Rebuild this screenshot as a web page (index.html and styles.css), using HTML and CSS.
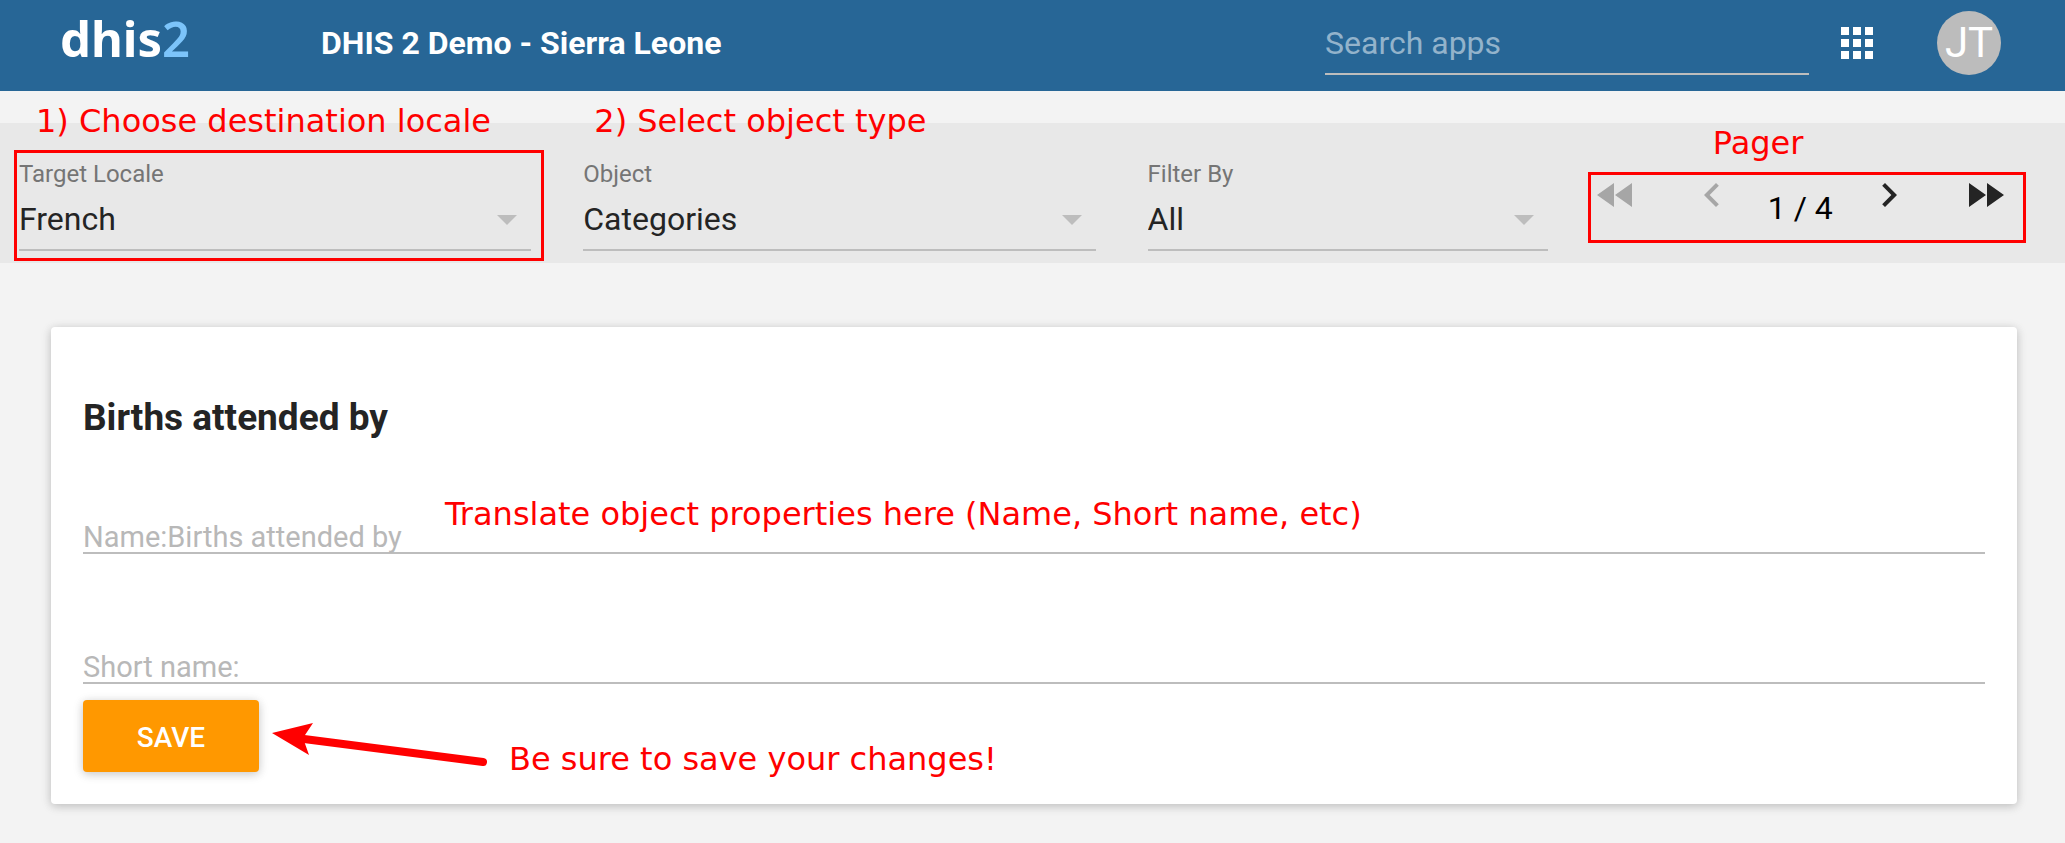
FILE: index.html
```
<!DOCTYPE html>
<html lang="en">
<head>
<meta charset="utf-8">
<meta name="viewport" content="width=device-width, initial-scale=1">
<title>DHIS 2 Demo - Sierra Leone</title>
<link rel="stylesheet" href="styles.css">
</head>
<body>
<header class="header">
  <a class="logo" href="#" aria-label="dhis2 home">dhis<span class="logo-digit">2</span></a>
  <h1 class="app-title">DHIS 2 Demo - Sierra Leone</h1>
  <input class="search" type="search" placeholder="Search apps" aria-label="Search apps">
  <button class="apps" type="button" aria-label="Apps">
    <svg viewBox="0 0 32 32" aria-hidden="true"><path d="M0 0h8v8H0zM12 0h8v8h-8zM24 0h8v8h-8zM0 12h8v8H0zM12 12h8v8h-8zM24 12h8v8h-8zM0 24h8v8H0zM12 24h8v8h-8zM24 24h8v8h-8z"/></svg>
  </button>
  <button class="avatar" type="button" aria-label="User profile">JT</button>
</header>

<section class="toolbar" aria-label="Filters">
  <div class="field">
    <label class="field-label" for="locale">Target Locale</label>
    <select class="field-select" id="locale"><option>French</option></select>
    <div class="frame frame-locale"></div>
    <p class="note note-locale">1) Choose destination locale</p>
  </div>
  <div class="field">
    <label class="field-label" for="object">Object</label>
    <select class="field-select" id="object"><option>Categories</option></select>
    <p class="note note-object">2) Select object type</p>
  </div>
  <div class="field">
    <label class="field-label" for="filter">Filter By</label>
    <select class="field-select" id="filter"><option>All</option></select>
  </div>
  <nav class="pager" aria-label="Pager">
    <button class="page-btn" type="button" disabled aria-label="First page"><svg viewBox="0 0 24 24" aria-hidden="true"><path d="M11 18V6l-8.5 6 8.5 6zm.5-6l8.5 6V6l-8.5 6z"/></svg></button>
    <button class="page-btn" type="button" disabled aria-label="Previous page"><svg viewBox="0 0 24 24" aria-hidden="true"><path d="M15.41 7.41L14 6l-6 6 6 6 1.41-1.41L10.83 12z"/></svg></button>
    <span class="page-count">1 / 4</span>
    <button class="page-btn" type="button" aria-label="Next page"><svg viewBox="0 0 24 24" aria-hidden="true"><path d="M10 6L8.59 7.41 13.17 12l-4.58 4.59L10 18l6-6z"/></svg></button>
    <button class="page-btn" type="button" aria-label="Last page"><svg viewBox="0 0 24 24" aria-hidden="true"><path d="M4 18l8.5-6L4 6v12zm9-12v12l8.5-6L13 6z"/></svg></button>
    <div class="frame frame-pager"></div>
    <p class="note note-pager">Pager</p>
  </nav>
</section>

<main class="content">
  <form class="card">
    <h2 class="card-title">Births attended by</h2>
    <div class="inputs">
      <div class="input-row">
        <input class="text-input" type="text" placeholder="Name:Births attended by" aria-label="Name">
        <p class="note note-translate">Translate object properties here (Name, Short name, etc)</p>
      </div>
      <div class="input-row">
        <input class="text-input" type="text" placeholder="Short name:" aria-label="Short name">
      </div>
    </div>
    <div class="actions">
      <button class="save" type="button">SAVE</button>
      <svg class="arrow" viewBox="0 0 224 48" aria-hidden="true"><path class="arrow-line" d="M32 16L211 39"/><path class="arrow-head" d="M0 10L41 0L31 15L37 32z"/></svg>
      <p class="note note-save">Be sure to save your changes!</p>
    </div>
  </form>
</main>
</body>
</html>
```
FILE: styles.css
```
* {
  box-sizing: border-box;
}

body {
  margin: 0;
  min-height: 100vh;
  background: #f3f3f3;
  color: #242424;
  font-family: Roboto, "Liberation Sans", sans-serif;
  font-size: 32px;
}

h1, h2, p {
  margin: 0;
}

button, input, select {
  font-family: inherit;
  border: 0;
  border-radius: 0;
  padding: 0;
  background: none;
}

/* Header */
.header {
  display: flex;
  align-items: center;
  height: 91px;
  padding: 0 64px 5px 60px;
  background: #276696;
  color: #fff;
}

.logo {
  width: 261px;
  padding-bottom: 10px;
  color: #fff;
  font-family: "Noto Sans", "Open Sans", sans-serif;
  font-size: 49px;
  font-weight: 700;
  line-height: 48px;
  text-decoration: none;
}

.logo-digit {
  color: #7cc4fa;
  font-weight: 600;
}

.app-title {
  font-size: 32px;
  font-weight: 700;
  line-height: 40px;
}

.search {
  width: 484px;
  height: 64px;
  margin-left: auto;
  padding-top: 2px;
  border-bottom: 2px solid #bdbdbd;
  color: #fff;
  font-size: 32px;
  align-self: flex-end;
  margin-bottom: 11px;
  appearance: none;
}

.search::placeholder {
  color: #93b3cb;
  opacity: 1;
}

.apps {
  width: 32px;
  height: 32px;
  margin-left: 32px;
}

.apps svg {
  display: block;
  fill: #fff;
}

.avatar {
  width: 64px;
  height: 64px;
  margin-left: 64px;
  border-radius: 50%;
  background: #bcbcbc;
  color: #fff;
  font-size: 42px;
  font-kerning: none;
  line-height: 64px;
  text-align: center;
}

/* Toolbar */
.toolbar {
  display: grid;
  grid-template-columns: 512fr 512fr 400fr 426fr;
  column-gap: 52px;
  margin-top: 32px;
  padding: 36px 39px 12px 19px;
  background: #e8e8e8;
}

.field {
  position: relative;
  height: 92px;
}

.field-label {
  display: block;
  color: #757575;
  font-size: 24px;
  line-height: 30px;
}

.field-select {
  display: block;
  width: 100%;
  height: 62px;
  border-bottom: 2px solid #bdbdbd;
  color: #242424;
  font-size: 32px;
  appearance: none;
}

.field::after {
  content: "";
  position: absolute;
  right: 14px;
  bottom: 26px;
  border: 10px solid transparent;
  border-top-color: #bdbdbd;
  border-bottom: 0;
  pointer-events: none;
}

.pager {
  position: relative;
  display: flex;
  column-gap: 32px;
  height: 72px;
  margin: 12px 0 0 -12px;
  padding-left: 4px;
}

.page-btn {
  width: 48px;
  height: 48px;
}

.page-btn svg {
  display: block;
  fill: #242424;
}

.page-btn:disabled svg {
  fill: #a6a6a6;
}

.page-btn:first-of-type {
  margin-right: 16px;
}

.page-btn:last-of-type {
  margin-left: 16px;
}

.page-count {
  color: #000;
  line-height: 74px;
}

/* Card */
.content {
  padding: 64px 48px 39px 51px;
}

.card {
  padding: 64px 32px 32px;
  border-radius: 4px;
  background: #fff;
  box-shadow: 0 2px 12px rgba(0, 0, 0, 0.12), 0 2px 8px rgba(0, 0, 0, 0.12);
}

.card-title {
  font-size: 37px;
  font-weight: 700;
  line-height: 54px;
}

.inputs {
  display: grid;
  row-gap: 96px;
  padding-top: 75px;
}

.input-row {
  position: relative;
}

.text-input {
  display: block;
  width: 100%;
  height: 34px;
  background: linear-gradient(#bdbdbd, #bdbdbd) bottom / 100% 2px no-repeat;
  color: #242424;
  font-size: 29px;
  line-height: 34px;
}

.text-input::placeholder {
  color: #b8b8b8;
  opacity: 1;
}

.actions {
  position: relative;
  padding-top: 16px;
}

.save {
  display: block;
  width: 176px;
  height: 72px;
  padding-top: 2px;
  border-radius: 4px;
  background: #ff9800;
  box-shadow: 0 2px 12px rgba(0, 0, 0, 0.12), 0 2px 8px rgba(0, 0, 0, 0.12);
  color: #fff;
  font-size: 28px;
  font-weight: 500;
}

/* Annotations drawn over the interface */
.note {
  position: absolute;
  color: #f00;
  font-family: "DejaVu Sans", sans-serif;
  font-size: 32px;
  line-height: 40px;
  white-space: nowrap;
}

.note-locale {
  left: 17px;
  top: -58px;
}

.note-object {
  left: 11px;
  top: -58px;
}

.note-pager {
  left: 125px;
  top: -48px;
}

.note-translate {
  left: 362px;
  top: -26px;
}

.note-save {
  left: 426px;
  top: 55px;
}

.frame {
  position: absolute;
  border: 3px solid #f00;
  pointer-events: none;
}

.frame-locale {
  inset: -9px -13px -10px -5px;
}

.frame-pager {
  inset: 1px 0 0;
}

.arrow {
  position: absolute;
  left: 189px;
  top: 39px;
  width: 224px;
  height: 48px;
}

.arrow-line {
  fill: none;
  stroke: #f00;
  stroke-width: 8;
  stroke-linecap: round;
}

.arrow-head {
  fill: #f00;
}
```
